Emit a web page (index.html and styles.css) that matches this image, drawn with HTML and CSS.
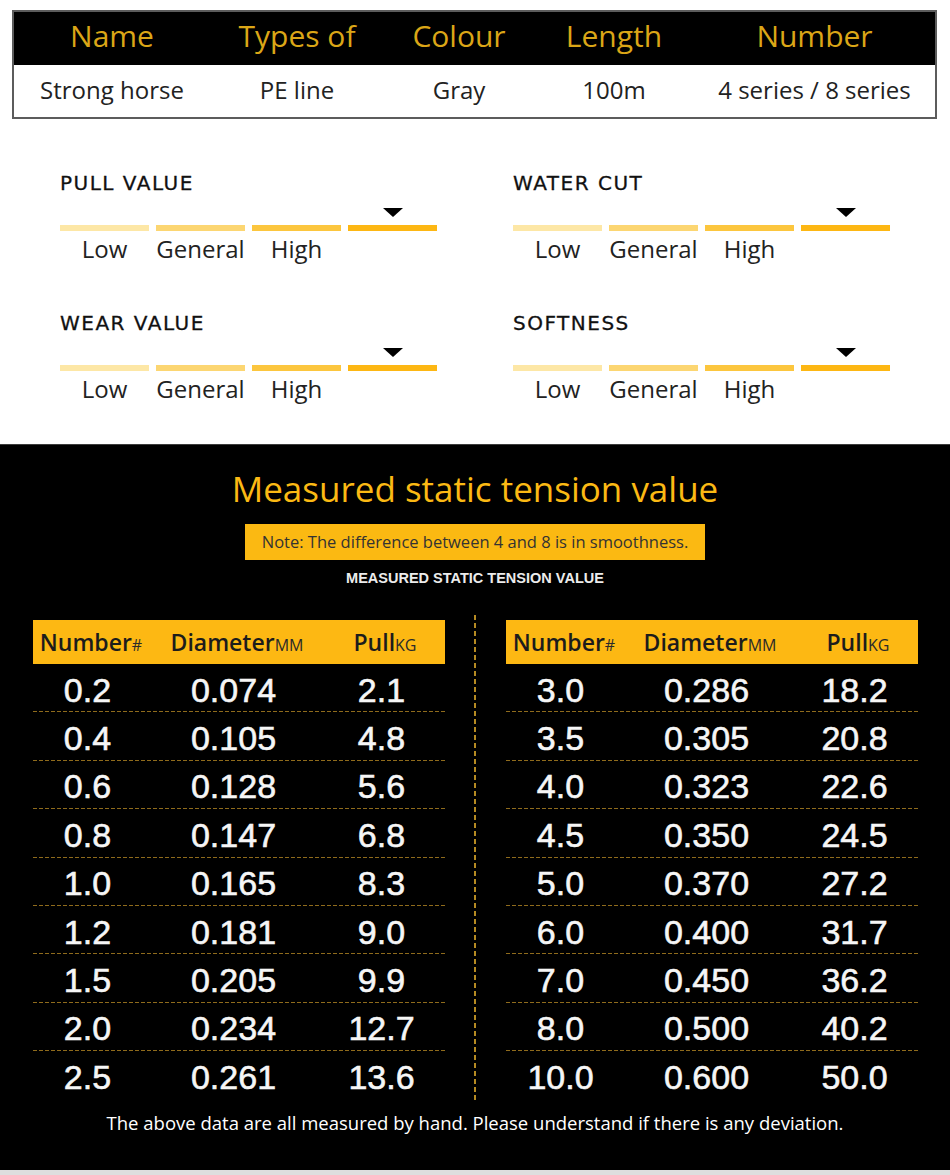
FILE: index.html
```html
<!DOCTYPE html>
<html>
<head>
<meta charset="utf-8">
<link rel="stylesheet" href="styles.css">
</head>
<body>
<div class="spec">
  <div class="spec-row spec-head">
    <div>Name</div><div>Types of</div><div>Colour</div><div>Length</div><div>Number</div>
  </div>
  <div class="spec-row spec-data">
    <div>Strong horse</div><div>PE line</div><div>Gray</div><div>100m</div><div>4 series / 8 series</div>
  </div>
</div>

<div class="ratings">
  <div class="rating">
    <div class="rating-title">PULL VALUE</div>
    <div class="scale marks"><span></span><span></span><span></span><span class="tri"></span></div>
    <div class="scale bars"><span class="b1"></span><span class="b2"></span><span class="b3"></span><span class="b4"></span></div>
    <div class="scale labels"><span>Low</span><span>General</span><span>High</span><span></span></div>
  </div>
  <div class="rating">
    <div class="rating-title">WATER CUT</div>
    <div class="scale marks"><span></span><span></span><span></span><span class="tri"></span></div>
    <div class="scale bars"><span class="b1"></span><span class="b2"></span><span class="b3"></span><span class="b4"></span></div>
    <div class="scale labels"><span>Low</span><span>General</span><span>High</span><span></span></div>
  </div>
  <div class="rating">
    <div class="rating-title">WEAR VALUE</div>
    <div class="scale marks"><span></span><span></span><span></span><span class="tri"></span></div>
    <div class="scale bars"><span class="b1"></span><span class="b2"></span><span class="b3"></span><span class="b4"></span></div>
    <div class="scale labels"><span>Low</span><span>General</span><span>High</span><span></span></div>
  </div>
  <div class="rating">
    <div class="rating-title">SOFTNESS</div>
    <div class="scale marks"><span></span><span></span><span></span><span class="tri"></span></div>
    <div class="scale bars"><span class="b1"></span><span class="b2"></span><span class="b3"></span><span class="b4"></span></div>
    <div class="scale labels"><span>Low</span><span>General</span><span>High</span><span></span></div>
  </div>
</div>

<div class="tension">
  <h1 class="t-title">Measured static tension value</h1>
  <div class="note">Note: The difference between 4 and 8 is in smoothness.</div>
  <div class="t-sub">MEASURED STATIC TENSION VALUE</div>
  <div class="tables">
    <div class="tbl">
      <div class="tr th"><div>Number<small>#</small></div><div>Diameter<small>MM</small></div><div>Pull<small>KG</small></div></div>
      <div class="tr"><div>0.2</div><div>0.074</div><div>2.1</div></div>
      <div class="tr"><div>0.4</div><div>0.105</div><div>4.8</div></div>
      <div class="tr"><div>0.6</div><div>0.128</div><div>5.6</div></div>
      <div class="tr"><div>0.8</div><div>0.147</div><div>6.8</div></div>
      <div class="tr"><div>1.0</div><div>0.165</div><div>8.3</div></div>
      <div class="tr"><div>1.2</div><div>0.181</div><div>9.0</div></div>
      <div class="tr"><div>1.5</div><div>0.205</div><div>9.9</div></div>
      <div class="tr"><div>2.0</div><div>0.234</div><div>12.7</div></div>
      <div class="tr last"><div>2.5</div><div>0.261</div><div>13.6</div></div>
    </div>
    <div class="divider"></div>
    <div class="tbl">
      <div class="tr th"><div>Number<small>#</small></div><div>Diameter<small>MM</small></div><div>Pull<small>KG</small></div></div>
      <div class="tr"><div>3.0</div><div>0.286</div><div>18.2</div></div>
      <div class="tr"><div>3.5</div><div>0.305</div><div>20.8</div></div>
      <div class="tr"><div>4.0</div><div>0.323</div><div>22.6</div></div>
      <div class="tr"><div>4.5</div><div>0.350</div><div>24.5</div></div>
      <div class="tr"><div>5.0</div><div>0.370</div><div>27.2</div></div>
      <div class="tr"><div>6.0</div><div>0.400</div><div>31.7</div></div>
      <div class="tr"><div>7.0</div><div>0.450</div><div>36.2</div></div>
      <div class="tr"><div>8.0</div><div>0.500</div><div>40.2</div></div>
      <div class="tr last"><div>10.0</div><div>0.600</div><div>50.0</div></div>
    </div>
  </div>
  <div class="footnote">The above data are all measured by hand. Please understand if there is any deviation.</div>
</div>
</body>
</html>
```

FILE: styles.css
```css
* { box-sizing: border-box; }
html, body { margin: 0; padding: 0; }
body {
  width: 950px;
  background: #ffffff;
  font-family: "Open Sans", "Noto Sans", sans-serif;
  color: #222;
}

/* top spec table */
.spec {
  margin: 10px 13px 0 12px;
  border: 2px solid #5c5c5c;
}
.spec-row {
  display: grid;
  grid-template-columns: 196px 174px 150px 160px 1fr;
  text-align: center;
}
.spec-head {
  background: #000;
  height: 53px;
  align-items: center;
  padding-bottom: 5px;
  color: #dba617;
  font-size: 30px;
  line-height: 40px;
}
.spec-data {
  height: 52px;
  align-items: center;
  padding-bottom: 3px;
  color: #222;
  font-size: 24px;
  line-height: 32px;
}

/* ratings */
.ratings {
  display: grid;
  grid-template-columns: 377px 377px;
  column-gap: 76px;
  row-gap: 48px;
  padding-left: 60px;
  margin-top: 53px;
}
.rating-title {
  font-family: "DejaVu Sans", Verdana, sans-serif;
  font-size: 20px;
  line-height: 22px;
  letter-spacing: 1.5px;
  color: #111;
  -webkit-text-stroke: 0.3px #111;
}
.scale {
  display: grid;
  grid-template-columns: repeat(4, 89px);
  column-gap: 7px;
}
.marks { height: 9px; margin-top: 14px; }
.tri {
  display: block;
  width: 0;
  height: 0;
  margin-left: 35px;
  border-left: 10.5px solid transparent;
  border-right: 10.5px solid transparent;
  border-top: 9px solid #000;
}
.bars { margin-top: 8px; height: 6px; }
.bars span { display: block; height: 6px; }
.b1 { background: #fde7a6; }
.b2 { background: #fcd672; }
.b3 { background: #fcc63e; }
.b4 { background: #fdb713; }
.labels {
  margin-top: 3px;
  font-size: 24px;
  line-height: 30px;
  color: #222;
  text-align: center;
}

/* tension section */
.tension {
  margin-top: 40px;
  background: #000;
  border-top: 1px solid #3c3c3c;
  border-bottom: 5px solid #dedede;
  height: 731px;
  padding-top: 20px;
  text-align: center;
}
.t-title {
  margin: 0;
  font-weight: 400;
  font-size: 35px;
  line-height: 48px;
  color: #fbb914;
}
.note {
  width: 460px;
  height: 36px;
  margin: 11px auto 0;
  background: #fbb912;
  color: #333;
  font-size: 16.5px;
  line-height: 36px;
}
.t-sub {
  margin-top: 9px;
  font-family: "Liberation Sans", Arial, sans-serif;
  font-weight: 700;
  font-size: 14.5px;
  line-height: 18px;
  color: #ececec;
}
.tables {
  display: flex;
  margin-top: 33px;
  padding-left: 33px;
}
.tbl { width: 412px; }
.divider {
  width: 2px;
  margin: -5px 30px 0 29px;
  height: 485px;
  background: linear-gradient(to bottom, #b58a22 5px, transparent 5px) top left / 2px 8px repeat-y;
}
.tr {
  display: grid;
  grid-template-columns: 116px 176px 1fr;
  align-items: center;
  height: 48.4px;
  padding-top: 4px;
  font-family: "Liberation Sans", Arial, sans-serif;
  font-size: 34px;
  color: #f6f6f6;
  -webkit-text-stroke: 0.6px #f6f6f6;
  background: linear-gradient(to right, #8f6b1c 4px, transparent 4px) bottom left / 6px 1px repeat-x;
}
.tr > div { padding-right: 7px; }
.tr.last { background: none; }
.tr.th {
  height: 44px;
  padding-top: 0;
  background: #fdb813;
  font-family: "Open Sans", "Noto Sans", sans-serif;
  font-weight: 600;
  font-size: 23px;
  color: #1c1c1c;
  -webkit-text-stroke: 0;
}
.tr.th > div { padding-right: 0; }
.tr.th small {
  font-weight: 400;
  font-size: 16px;
  color: #2a2a2a;
}
.footnote {
  margin-top: 11px;
  font-size: 18.5px;
  line-height: 24px;
  color: #fff;
}
```
